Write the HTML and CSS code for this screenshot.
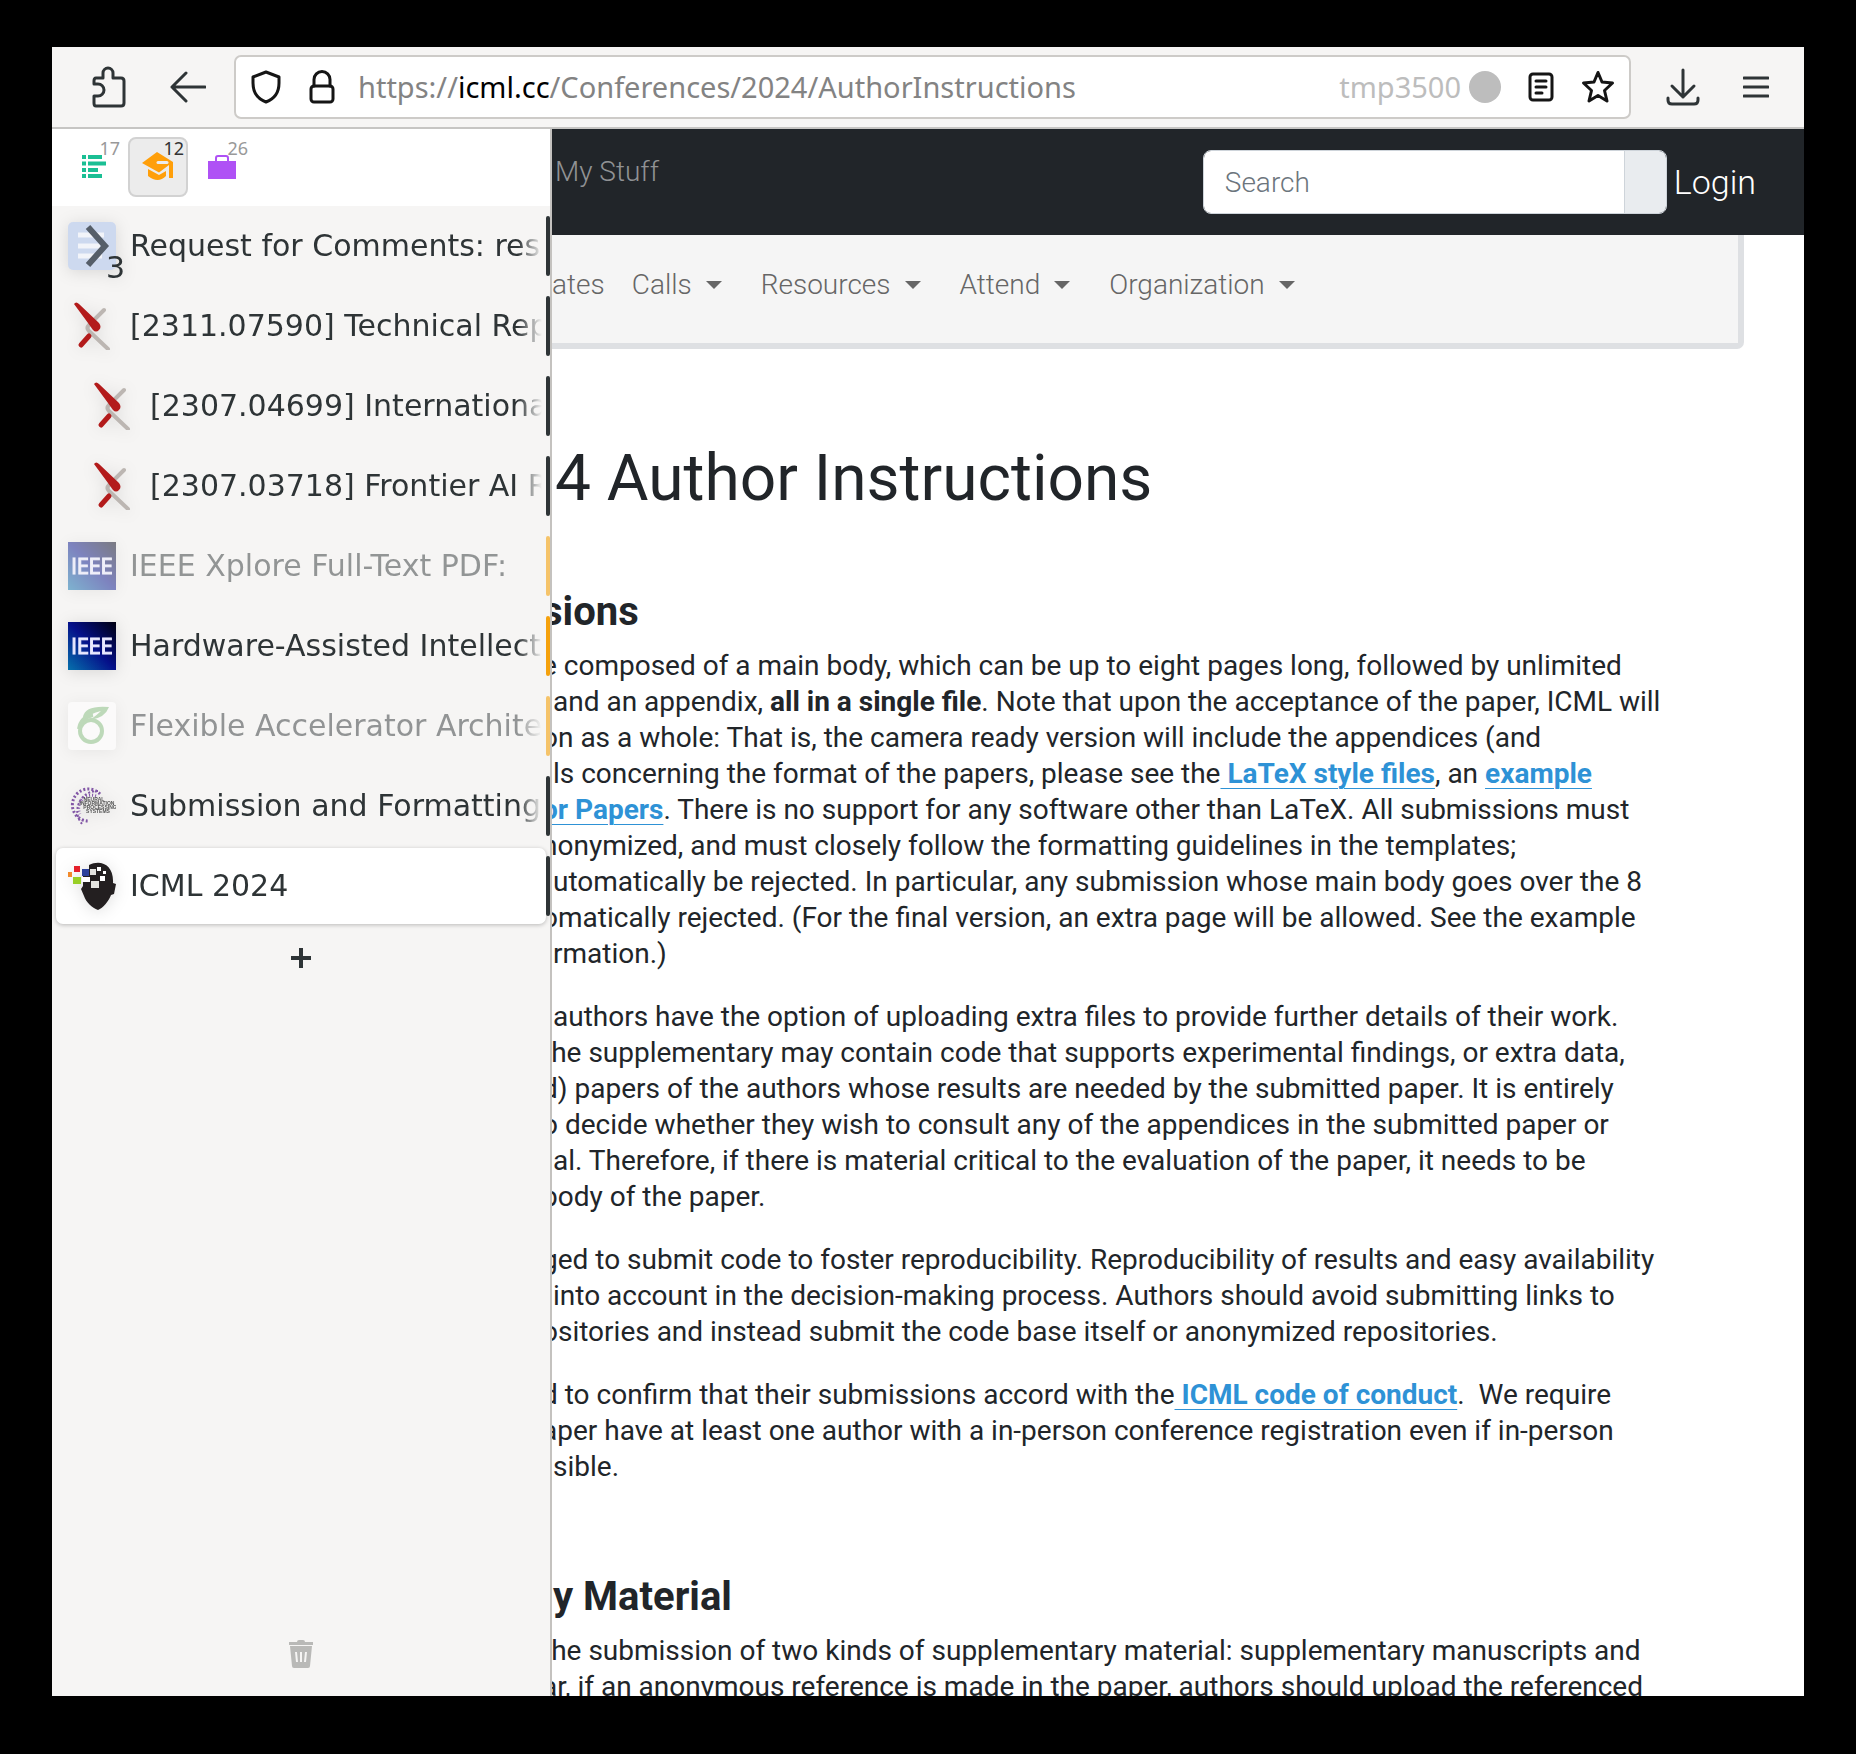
FILE: index.html
```html
<!DOCTYPE html>
<html lang="en">
<head>
<meta charset="utf-8">
<title>ICML 2024 Author Instructions</title>
<link rel="stylesheet" href="styles.css">
</head>
<body>
<div class="window">
  <header class="toolbar">
    <button class="tool puzzle" aria-label="Extensions"><svg width="34" height="42" viewBox="0 0 34 42"><path d="M4 40H29Q32 40 32 37V15Q32 12 29 12H21V7A5 5 0 0 0 11 7V12H4Q2 12 2 15V18H6A6 6 0 0 1 6 30H2V37Q2 40 4 40Z"/></svg></button>
    <button class="tool" aria-label="Back"><svg width="36" height="32" viewBox="0 0 36 32"><path d="M35 16H2M16 2L2 16L16 30"/></svg></button>
    <div class="urlbar">
      <svg class="shield" width="30" height="34" viewBox="0 0 30 34"><path d="M15 2L28 7V13C28 23 23 29 15 32C7 29 2 23 2 13V7Z"/></svg>
      <svg class="lock" width="26" height="34" viewBox="0 0 26 34"><path d="M5 16V9.500A8 8 0 0 1 21 9.500V16"/><rect x="2" y="16" width="22" height="16" rx="3"/></svg>
      <div class="url">https://<b>icml.cc</b>/Conferences/2024/AuthorInstructions</div>
      <div class="container-name">tmp3500 <span class="dot"></span></div>
      <button aria-label="Reader view"><svg width="26" height="30" viewBox="0 0 26 30"><rect x="2" y="2" width="22" height="26" rx="3"/><path d="M8 9H18M8 15H18M8 21H14"/></svg></button>
      <button aria-label="Bookmark"><svg width="34" height="34" viewBox="0 0 34 34"><path d="M17 2.500L21 12L31.500 13L23.500 20.500L26 31L17 25.500L8 31L10.500 20.500L2.500 13L13 12Z"/></svg></button>
    </div>
    <button class="tool download" aria-label="Downloads"><svg width="34" height="38" viewBox="0 0 34 38"><path d="M17 2V29M6 18L17 29L28 18M2 30V32Q2 36 6 36H28Q32 36 32 32V30"/></svg></button>
    <button class="tool" aria-label="Menu"><svg width="26" height="22" viewBox="0 0 26 22"><path d="M1 2H25M1 11H25M1 20H25"/></svg></button>
  </header>
  <div class="body">
    <aside class="sidebar">
      <nav class="panels">
        <button><svg width="24" height="24" viewBox="0 0 24 24" fill="#1abf94"><path d="M0 0h4v4H0zM6 0h14v4H6zM0 6.500h4v4H0zM6 6.500h18v4H6zM0 13h4v4H0zM6 13h10v4H6zM0 19h4v4H0zM6 19h14v4H6z"/></svg><span>17</span></button>
        <button class="on"><svg width="32" height="30" viewBox="0 0 32 30"><path fill="#ff9f0a" d="M15 0L31 10V26H27V13L17 20.500L0 11ZM6 17L17 23L24 19V24Q16 32 6 24Z"/><path d="M16 10.500H25" stroke="#ececec" stroke-width="3" stroke-linecap="round"/></svg><span>12</span></button>
        <button><svg width="28" height="26" viewBox="0 0 28 26"><path fill="#af51f5" d="M0 7H28V25H0Z"/><path d="M8 7V4Q8 2 10 2H18Q20 2 20 4V7" fill="none" stroke="#af51f5" stroke-width="2"/></svg><span>26</span></button>
      </nav>
      <ul class="tabs">
        <li><a href="#"><span class="fav"><svg width="48" height="48" viewBox="0 0 48 48"><rect width="48" height="48" rx="5" fill="#cdd9ef"/><path d="M10 13H36M10 24H32M10 34H34" stroke="#f2f4f9" stroke-width="5"/><path d="M20 5L37 24L20 43" fill="none" stroke="#555e69" stroke-width="6"/></svg><span class="count">3</span></span><span class="title">Request for Comments: research</span></a></li>
        <li><a href="#"><span class="fav"><svg width="48" height="48"><use href="#arxiv"/></svg></span><span class="title">[2311.07590] Technical Report</span></a></li>
        <li class="child"><a href="#"><span class="fav"><svg width="48" height="48"><use href="#arxiv"/></svg></span><span class="title">[2307.04699] International</span></a></li>
        <li class="child"><a href="#"><span class="fav"><svg width="48" height="48"><use href="#arxiv"/></svg></span><span class="title">[2307.03718] Frontier AI Regulation</span></a></li>
        <li class="amber idle"><a href="#"><span class="fav"><svg width="48" height="48"><use href="#ieee"/></svg></span><span class="title">IEEE Xplore Full-Text PDF:</span></a></li>
        <li class="amber"><a href="#"><span class="fav"><svg width="48" height="48"><use href="#ieee"/></svg></span><span class="title">Hardware-Assisted Intellectual</span></a></li>
        <li class="amber idle"><a href="#"><span class="fav"><svg width="48" height="48" viewBox="0 0 48 48"><rect width="48" height="48" rx="4" fill="#fff"/><g fill="none" stroke="#84bd7e"><circle cx="23" cy="29" r="11" stroke-width="4"/><path d="M11 27Q13 15 25 13" stroke-width="4"/></g><path d="M15 15Q17 3 41 5Q37 16 22 18Q29 13 33 9Q22 11 15 19Z" fill="#84bd7e"/></svg></span><span class="title">Flexible Accelerator Architecture</span></a></li>
        <li><a href="#"><span class="fav"><svg width="48" height="48" viewBox="0 0 48 48"><g fill="none" stroke="#8257a6"><path d="M32 12A16 16 0 1 0 20 39" stroke-width="3" stroke-dasharray="2 2"/><path d="M28 14A13 13 0 0 0 12 32" stroke-width="3" stroke-dasharray="1 2"/><path d="M30 9A20 20 0 0 0 15 43" stroke-width="2" stroke-dasharray="2 2"/></g><g font-family="Liberation Sans" font-size="5" font-weight="bold" fill="#555" text-anchor="middle"><text x="26" y="19">NEURAL</text><text x="29" y="23">INFORMATION</text><text x="32" y="27">PROCESSING</text><text x="30" y="31">SYSTEMS</text></g></svg></span><span class="title">Submission and Formatting Guide</span></a></li>
        <li class="active"><a href="#"><span class="fav"><svg width="48" height="48" viewBox="0 0 48 48"><path fill="#231f20" d="M21 3C33-3 46 3 45 21L48 22L46 32L43 33C41 39 35 46 30 48C24 46 18 40 16 34L13 27L15 24V12H21Z"/><path fill="#e5202b" d="M6 4h6v6H6z"/><path fill="#f28a2b" d="M0 10h4v5H0z"/><path fill="#2c419b" d="M14 7h7v7h-7z"/><path fill="#98cf26" d="M5 15h8v7H5z"/><path fill="#e4e4e0" d="M22 7h6v6h-6zM23 19h8v7h-8z"/><path fill="#fff" d="M29 5h4v4h-4zM32 14h5v5h-5zM35 9h3v3h-3zM14 15h8v5h-8z"/></svg></span><span class="title">ICML 2024</span></a></li>
      </ul>
      <button class="new" aria-label="New tab"><svg width="20" height="20" viewBox="0 0 20 20"><path d="M10 0V20M0 10H20" stroke="#2e3436" stroke-width="4"/></svg></button>
      <button class="trash" aria-label="Recently closed"><svg width="24" height="28" viewBox="0 0 24 28"><path fill="#b9b9b7" d="M0 2H8Q8 0 10 0H14Q16 0 16 2H24V5H0ZM1 6H23L21 26Q21 28 19 28H5Q3 28 3 26Z"/><path d="M7 12L8 22M12 12V22M17 12L16 22" stroke="#f6f5f4" stroke-width="2"/></svg></button>
    </aside>
    <main class="page">
      <div class="topnav">
        <a href="#" class="stuff">My Stuff</a>
        <form class="search"><input type="text" placeholder="Search" aria-label="Search"><button type="button" aria-label="Submit search"></button></form>
        <a href="#" class="login">Login</a>
      </div>
      <nav class="subnav">
        <a href="#" class="dates">ates</a><a href="#" class="drop">Calls</a><a href="#" class="drop">Resources</a><a href="#" class="drop">Attend</a><a href="#" class="drop">Organization</a>
      </nav>
      <article class="content">
        <h1>4 Author Instructions</h1>
        <h2><span class="cut">sions</span></h2>
        <p>
          <span class="cut">e composed of a main body, which can be up to eight pages long, followed by unlimited</span>
          <span>and an appendix, <b>all in a single file</b>. Note that upon the acceptance of the paper, ICML will</span>
          <span class="cut">on as a whole: That is, the camera ready version will include the appendices (and</span>
          <span>ls concerning the format of the papers, please see the<a href="#"> LaTeX style files</a>, an <a href="#">example</a></span>
          <span class="cut"><a href="#">or Papers</a>. There is no support for any software other than LaTeX. All submissions must</span>
          <span class="cut">nonymized, and must closely follow the formatting guidelines in the templates;</span>
          <span>utomatically be rejected. In particular, any submission whose main body goes over the 8</span>
          <span class="cut">omatically rejected. (For the final version, an extra page will be allowed. See the example</span>
          <span>rmation.)</span>
        </p>
        <p>
          <span>authors have the option of uploading extra files to provide further details of their work.</span>
          <span class="cut">the supplementary may contain code that supports experimental findings, or extra data,</span>
          <span class="cut">d) papers of the authors whose results are needed by the submitted paper. It is entirely</span>
          <span class="cut">o decide whether they wish to consult any of the appendices in the submitted paper or</span>
          <span>al. Therefore, if there is material critical to the evaluation of the paper, it needs to be</span>
          <span class="cut">body of the paper.</span>
        </p>
        <p>
          <span class="cut">ged to submit code to foster reproducibility. Reproducibility of results and easy availability</span>
          <span>into account in the decision-making process. Authors should avoid submitting links to</span>
          <span class="cut">ositories and instead submit the code base itself or anonymized repositories.</span>
        </p>
        <p>
          <span class="cut">d to confirm that their submissions accord with the<a href="#"> ICML code of conduct</a>.&nbsp; We require</span>
          <span class="cut">aper have at least one author with a in-person conference registration even if in-person</span>
          <span>sible.</span>
        </p>
        <h2 class="next"><span>y Material</span></h2>
        <p>
          <span class="cut">the submission of two kinds of supplementary material: supplementary manuscripts and</span>
          <span class="cut">ar, if an anonymous reference is made in the paper, authors should upload the referenced</span>
        </p>
      </article>
    </main>
  </div>
</div>
<svg class="defs" aria-hidden="true"><defs>
  <linearGradient id="blue" x1="0" y1="1" x2="1" y2="0"><stop offset="0" stop-color="#0671ac"/><stop offset=".5" stop-color="#05108a"/><stop offset="1" stop-color="#000010"/></linearGradient>
  <symbol id="arxiv" viewBox="0 0 48 48"><path d="M36 8L21 23Q18 26 21 29L40 47" stroke="#bcb6b2" stroke-width="4" stroke-linecap="round" fill="none"/><path d="M21 34L13 43" stroke="#b31b1b" stroke-width="5" stroke-linecap="round"/><path fill="#b31b1b" d="M6 2Q8-1 11 2L31 21Q34 25 31 28Q28 31 25 28L20 21Z"/></symbol>
  <symbol id="ieee" viewBox="0 0 48 48"><rect width="48" height="48" fill="url(#blue)"/><text x="24" y="32" font-family="DejaVu Sans Condensed, DejaVu Sans" font-size="21" text-anchor="middle" fill="#e9e9ff" stroke="#e9e9ff">IEEE</text></symbol>
</defs></svg>
</body>
</html>
```
FILE: styles.css
```css
* { box-sizing: border-box; }
body { margin: 0; height: 100vh; padding: 47px 52px 58px; background: #000; color: #212529; font-family: Roboto, sans-serif; font-size: 28px; line-height: 36px; }
button { border: 0; padding: 0; background: none; display: flex; align-items: center; justify-content: center; position: relative; }
a { text-decoration: none; color: inherit; }
.defs { position: absolute; width: 0; height: 0; }
.window { height: 100%; display: flex; flex-direction: column; overflow: hidden; background: #fff; }

.toolbar { flex: none; height: 82px; padding: 0 35px 0 40px; display: flex; align-items: center; background: #f6f5f4; border-bottom: 2px solid #c6c5c3; }
.toolbar svg { fill: none; stroke: #2e3436; stroke-width: 3; stroke-linecap: round; stroke-linejoin: round; display: block; }
.tool { flex: none; margin-right: 44px; }
.tool + .tool { margin-right: 28px; }
.download { margin: 0 16px 0 35px; }
.toolbar .download + .tool { margin: 0 0 0 27px; }
.urlbar { flex: 1; height: 64px; padding: 0 14px 0 15px; display: flex; align-items: center; background: #fff; border: 2px solid #cdcbc8; border-radius: 7px; font-family: "Noto Sans", sans-serif; font-size: 29px; }
.urlbar svg { stroke: #151515; }
.lock { margin: 0 23px 0 28px; }
.url { flex: 1; color: #838383; white-space: nowrap; }
.url b { font-weight: 400; color: #000; }
.container-name { display: flex; align-items: center; gap: 8px; color: #bdbdbd; }
.dot { width: 32px; height: 32px; border-radius: 50%; background: #bdbdbd; }
.urlbar button { margin-left: 27px; }

.body { flex: 1; min-height: 0; display: flex; }
.sidebar { flex: none; width: 500px; display: flex; flex-direction: column; background: #f6f5f4; border-right: 2px solid #c4c2bf; font-family: "DejaVu Sans", sans-serif; }
.panels { height: 77px; padding: 8px 12px; display: flex; gap: 4px; background: #fff; }
.panels button { width: 60px; height: 60px; border-radius: 8px; }
.panels .on { background: #ececec; border: 2px solid #d2d2d2; color: #333; }
.panels span { position: absolute; top: 1px; right: 4px; font: 18px/20px "Noto Sans", sans-serif; color: #999; }
.panels .on span { top: -1px; right: 2px; color: #333; }
.tabs { list-style: none; margin: 0; padding: 0; }
.tabs li { height: 80px; padding: 2px 0; display: flex; position: relative; color: #2e3436; font-size: 30px; }
.tabs li::after { content: ""; position: absolute; right: 0; top: 10px; width: 4px; height: 60px; border-radius: 3px; background: #2e3436; }
.tabs a { flex: 1; min-width: 0; margin: 0 4px; padding: 0 4px 0 12px; display: flex; align-items: center; gap: 14px; border-radius: 7px; }
.tabs .child a { padding-left: 32px; }
.fav { flex: none; height: 48px; position: relative; filter: drop-shadow(0 2px 8px rgba(0, 0, 0, .12)); }
.count { position: absolute; right: -9px; bottom: -16px; line-height: 36px; }
.title { flex: 1; overflow: hidden; white-space: nowrap; mask-image: linear-gradient(90deg, #000 calc(100% - 24px), transparent); }
.tabs .amber::after { background: #f5a10c; }
.idle a { opacity: .5; }
.tabs .idle::after { opacity: .6; }
.active a { background: #fff; box-shadow: 0 1px 4px rgba(0, 0, 0, .25); }
.new { align-self: center; margin-top: 22px; }
.trash { align-self: center; margin-top: auto; margin-bottom: 28px; }

.page { flex: 1; min-width: 0; overflow: hidden; background: #fff; }
.topnav { height: 106px; padding: 0 48px 0 3px; display: flex; align-items: center; background: #212529; }
.stuff { flex: 1; margin-bottom: 20px; color: #909294; font-weight: 300; }
.search { width: 464px; height: 64px; display: flex; border: 1px solid #ced4da; border-radius: 8px; overflow: hidden; }
.search input { flex: 1; min-width: 0; border: 0; padding: 0 21px; font: 300 28px Roboto, sans-serif; color: #212529; background: #fff; }
.search input::placeholder { color: #6c757d; }
.search button { width: 42px; border-left: 1px solid #ced4da; background: #e9ecef; }
.login { margin-left: 7px; color: #fff; font-size: 34px; font-weight: 300; }
.subnav { height: 114px; margin-right: 60px; padding: 0 0 8px 0; display: flex; align-items: center; background: #f5f5f5; border: solid #dee0e3; border-width: 0 6px 6px 0; border-radius: 0 0 7px; color: #666; font-weight: 300; }
.dates { margin-right: 27px; }
.drop { display: flex; align-items: center; margin-right: 39px; }
.drop::after { content: ""; margin-left: 14px; border: 8px solid transparent; border-top-color: #666; border-bottom: 0; }

.content h1 { margin: 93px 0 74px; padding-left: 3px; font-size: 64px; line-height: 74px; font-weight: 400; }
.content h2 { margin: 0 0 14px; font-size: 40px; line-height: 44px; font-weight: 700; }
.content p { margin: 0 0 27px; }
.content span { display: block; white-space: nowrap; padding-left: 1px; }
.content .cut { padding: 0; margin-left: -10px; }
.content b, .content p a { font-weight: 700; }
.content p a { color: #2e92d6; text-decoration: underline 1px; text-underline-offset: 5px; }
.content .next { margin-top: 90px; }
```
